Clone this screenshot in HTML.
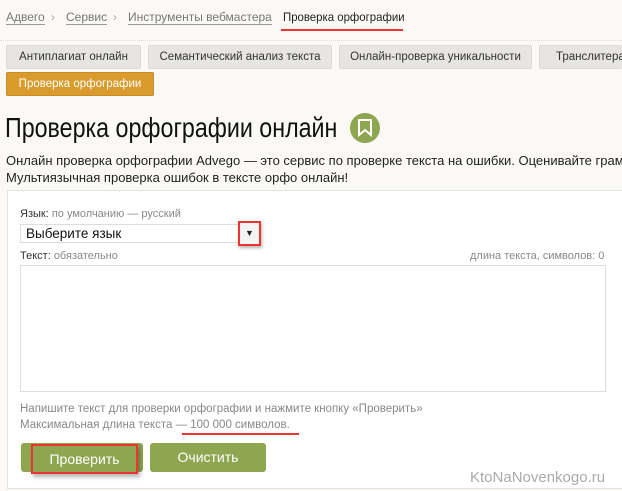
<!DOCTYPE html>
<html><head><meta charset="utf-8"><style>
*{margin:0;padding:0;box-sizing:border-box}
html,body{overflow:hidden}
body{width:622px;height:491px;background:#faf9f6;font-family:"Liberation Sans","DejaVu Sans",sans-serif;position:relative;color:#222}
.a{position:absolute;white-space:nowrap}
.bc{top:10px;font-size:12px;color:#777}
.bc u{text-decoration:none;border-bottom:1px solid #999}
.tab{position:absolute;top:45px;height:24px;background:#e6e5e2;border:1px solid #dcdbd8;border-radius:2px;font-size:11.5px;color:#333;line-height:22px;text-align:center;overflow:hidden}
</style></head><body>
<div class="a bc" style="left:6px"><u>Адвего</u></div>
<div class="a bc" style="left:51px;color:#aaa">›</div>
<div class="a bc" style="left:66px"><u>Сервис </u></div>
<div class="a bc" style="left:113px;color:#aaa">›</div>
<div class="a bc" style="left:128px"><u>Инструменты вебмастера </u></div>
<div class="a bc" style="left:268px;color:#aaa">›</div>
<div class="a bc" style="left:283px;color:#222;transform:scaleX(.95);transform-origin:left">Проверка орфографии</div>
<div class="a" style="left:281px;top:29px;width:122px;height:2px;background:#e33"></div>
<div class="a" style="left:0;top:40px;width:622px;border-top:1px dotted #ddd"></div>
<div class="tab" style="left:6px;width:135px">Антиплагиат онлайн</div>
<div class="tab" style="left:148px;width:184px">Семантический анализ текста</div>
<div class="tab" style="left:339px;width:193px">Онлайн-проверка уникальности</div>
<div class="tab" style="left:539px;width:83px;text-align:left;padding-left:16px;border-right:none">Транслитерация</div>
<div class="tab" style="left:6px;top:72px;width:148px;background:#d89b2c;border-color:#c98e22;color:#fff">Проверка орфографии</div>
<div class="a" style="left:5px;top:112px;font-size:28px;color:#111;transform:scaleX(.83);transform-origin:left">Проверка орфографии онлайн</div>
<div class="a" style="left:350px;top:113px;width:30px;height:30px;border-radius:50%;background:#8fa650"></div>
<svg class="a" style="left:357px;top:119px" width="16" height="18"><path d="M2 1H14V16L8 11L2 16Z" fill="none" stroke="#fff" stroke-width="2"/></svg>
<div class="a" style="left:6px;top:152px;width:616px;overflow:hidden;font-size:13px;line-height:17px;color:#222">Онлайн проверка орфографии Advego — это сервис по проверке текста на ошибки. Оценивайте грамотность<br>Мультиязычная проверка ошибок в тексте орфо онлайн!</div>
<div class="a" style="left:7px;top:190px;width:615px;height:299px;background:#fff;border:1px solid #e2e2e2;border-right:none"></div>
<div class="a" style="left:20px;top:208px;font-size:11px;color:#333">Язык: <span style="color:#888">по умолчанию — русский</span></div>
<div class="a" style="left:20px;top:224px;width:240px;height:19px;border:1px solid #ddd;background:#fff;font-size:13.5px;line-height:17px;padding-left:5px;color:#111">Выберите язык</div>
<div class="a" style="left:238px;top:221px;width:23px;height:25px;border:2px solid #e33;box-shadow:1px 2px 3px rgba(0,0,0,.3);background:#f4f4f4;font-size:9px;text-align:center;line-height:21px">▼</div>
<div class="a" style="left:20px;top:250px;font-size:11px;color:#333">Текст: <span style="color:#888">обязательно</span></div>
<div class="a" style="left:470px;top:250px;font-size:11px;color:#888">длина текста, символов: 0</div>
<div class="a" style="left:20px;top:265px;width:586px;height:127px;border:1px solid #ddd;background:#fff"></div>
<div class="a" style="left:20px;top:401px;font-size:11.5px;line-height:16px;color:#888">Напишите текст для проверки орфографии и нажмите кнопку «Проверить»<br>Максимальная длина текста — 100 000 символов.</div>
<div class="a" style="left:182px;top:433px;width:117px;height:2px;background:#e33"></div>
<div class="a" style="left:21px;top:443px;width:122px;height:29px;background:#8fa650;border-radius:3px"></div>
<div class="a" style="left:31px;top:444px;width:107px;height:30px;border:2px solid #e33;box-shadow:2px 3px 4px rgba(0,0,0,.3);color:#fff;font-size:14px;text-align:center;line-height:26px">Проверить</div>
<div class="a" style="left:150px;top:443px;width:116px;height:29px;background:#8fa650;border-radius:3px;color:#fff;font-size:14px;text-align:center;line-height:29px">Очистить</div>
<div class="a" style="left:470px;top:469px;font-size:15px;color:#aaa">KtoNaNovenkogo.ru</div>
</body></html>
